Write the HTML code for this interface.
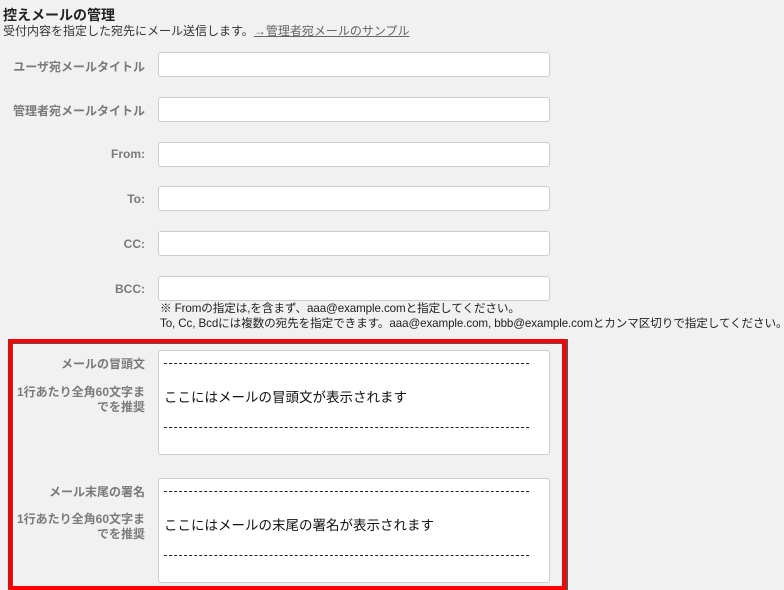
<!DOCTYPE html>
<html><head><meta charset="utf-8"><style>
html,body{margin:0;width:784px;height:590px;overflow:hidden}
body{background:#f1f1f1;font-family:"Liberation Sans","Noto Sans CJK JP",sans-serif;position:relative;color:#333}
.a{position:absolute}
.lbl{position:absolute;right:639px;font-size:12px;font-weight:bold;color:#7a7a7a;text-align:right;white-space:nowrap}
.in{position:absolute;left:158px;width:390px;height:23px;background:#fff;border:1px solid #ccc;border-radius:3px}
.ta{position:absolute;left:158px;width:390px;height:103px;background:#fff;border:1px solid #ccc;border-radius:3px;font-size:13.5px;color:#111}
.dash{position:absolute;left:5px;width:365px;border-top:1px dashed #222}
</style></head><body>
<div class="a" style="left:3px;top:5px;font-size:14px;font-weight:bold;color:#222">控えメールの管理</div>
<div class="a" style="left:3px;top:22px;font-size:12px;color:#333">受付内容を指定した宛先にメール送信します。<span style="color:#666;text-decoration:underline">→管理者宛メールのサンプル</span></div>
<div class="lbl" style="top:58px">ユーザ宛メールタイトル</div><div class="in" style="top:52px"></div>
<div class="lbl" style="top:102px">管理者宛メールタイトル</div><div class="in" style="top:97px"></div>
<div class="lbl" style="top:147px">From:</div><div class="in" style="top:142px"></div>
<div class="lbl" style="top:192px">To:</div><div class="in" style="top:186px"></div>
<div class="lbl" style="top:237px">CC:</div><div class="in" style="top:231px"></div>
<div class="lbl" style="top:282px">BCC:</div><div class="in" style="top:276px"></div>
<div class="a" style="left:160px;top:301px;font-size:11.6px;line-height:15px;color:#222;white-space:nowrap;letter-spacing:-0.1px">※ Fromの指定は,を含まず、aaa@example.comと指定してください。<br>To, Cc, Bcdには複数の宛先を指定できます。aaa@example.com, bbb@example.comとカンマ区切りで指定してください。</div>
<div class="a" style="left:8px;top:339px;width:550px;height:243px;border:4px solid #f00;box-shadow:inset 1px 1px 0 #555,2px 0 0 #555"></div>
<div class="lbl" style="top:355px">メールの冒頭文</div>
<div class="lbl" style="top:385px;line-height:15px">1行あたり全角60文字ま<br>でを推奨</div>
<div class="ta" style="top:350px"><div class="dash" style="top:12px"></div><div class="a" style="left:5px;top:35px">ここにはメールの冒頭文が表示されます</div><div class="dash" style="top:76px"></div></div>
<div class="lbl" style="top:483px">メール末尾の署名</div>
<div class="lbl" style="top:512px;line-height:15px">1行あたり全角60文字ま<br>でを推奨</div>
<div class="ta" style="top:478px"><div class="dash" style="top:12px"></div><div class="a" style="left:5px;top:35px">ここにはメールの末尾の署名が表示されます</div><div class="dash" style="top:76px"></div></div>
</body></html>
